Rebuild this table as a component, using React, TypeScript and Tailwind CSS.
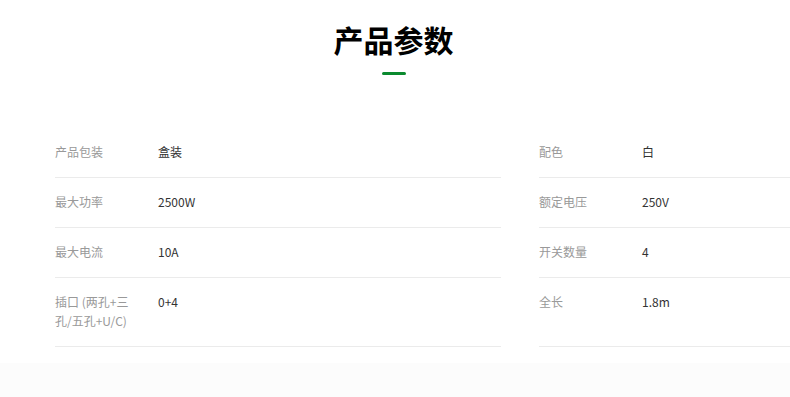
const ROWS: [string, string, string, string][] = [
  ['产品包装', '盒装', '配色', '白'],
  ['最大功率', '2500W', '额定电压', '250V'],
  ['最大电流', '10A', '开关数量', '4'],
  ['插口 (两孔+三孔/五孔+U/C)', '0+4', '全长', '1.8m'],
]

function Cell({ label, value }: { label: string; value: string }) {
  return (
    <div className="grid w-[446px] shrink-0 grid-cols-[80px_1fr] gap-x-[23px] border-b border-[#ebebeb] pt-[14px] pb-[16px] text-[12px] leading-[19px]">
      <div className="text-[#999]">{label}</div>
      <div className="text-[#333]">{value}</div>
    </div>
  )
}

export default function App() {
  return (
    <div
      className="min-h-[397px] overflow-hidden bg-white"
      style={{ fontFamily: '"Noto Sans CJK SC", "Noto Sans", sans-serif' }}
    >
      <div className="flex flex-col items-center pr-[3px] pt-[19px]">
        <h2 className="text-[30px] font-bold leading-[40px] text-black">产品参数</h2>
        <div className="mt-[13px] h-[3px] w-[24px] rounded-full bg-[#0b8a2f]" />
      </div>

      <div className="mt-[53px] flex flex-col pl-[55px]">
        {ROWS.map(([l1, v1, l2, v2]) => (
          <div key={l1} className="flex gap-[38px]">
            <Cell label={l1} value={v1} />
            <Cell label={l2} value={v2} />
          </div>
        ))}
      </div>

      <div className="mt-[16px] h-[40px] bg-[#fcfcfc]" />
    </div>
  )
}
